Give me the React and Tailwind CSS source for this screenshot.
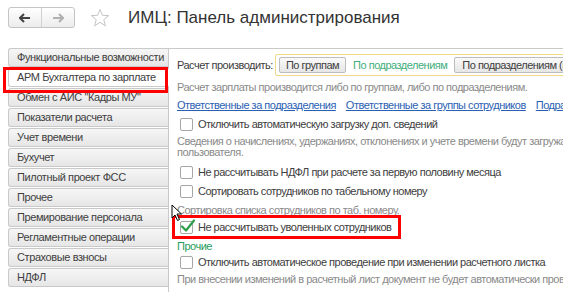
import React from 'react';

const TABS = [
  'Функциональные возможности',
  'АРМ Бухгалтера по зарплате',
  'Обмен с АИС "Кадры МУ"',
  'Показатели расчета',
  'Учет времени',
  'Бухучет',
  'Пилотный проект ФСС',
  'Прочее',
  'Премирование персонала',
  'Регламентные операции',
  'Страховые взносы',
  'НДФЛ',
];

function Checkbox({ checked, label, className = '' }) {
  return (
    <div className={`flex items-center h-[16px] ${className}`}>
      <div className="relative w-[13px] h-[13px] ml-[3px] mr-[5px] border border-[#a6a6a6] rounded-[2px] bg-white shrink-0">
        {checked && (
          <svg className="absolute -left-[1px] -top-[4px]" width="16" height="16" viewBox="0 0 16 16">
            <path d="M2 8.5 L6 12.5 L14 2.5" fill="none" stroke="#2e9d4a" strokeWidth="2.2" strokeLinecap="round" strokeLinejoin="round" />
          </svg>
        )}
      </div>
      <span className="text-[11px] tracking-[-0.5px] text-[#404040] whitespace-nowrap">{label}</span>
    </div>
  );
}

function Hint({ children, className = '' }) {
  return (
    <div className={`text-[11px] leading-[11px] tracking-[-0.5px] text-[#8a8a8a] whitespace-nowrap ${className}`}>
      {children}
    </div>
  );
}

export default function App() {
  return (
    <div className="relative w-[563px] h-[292px] overflow-hidden bg-white font-['Liberation_Sans',Arial,sans-serif]">
      {/* header */}
      <div className="flex items-start h-[48px] pl-2 pt-[7px]">
        <div className="flex h-[21px] w-[67px] border border-[#c4c4c4] rounded-[3px] bg-linear-to-b from-white to-[#ececec]">
          <div className="flex-1 flex items-center justify-center border-r border-[#d0d0d0]">
            <svg width="12" height="10" viewBox="0 0 12 10">
              <path d="M1 5 H11 M5 1 L1 5 L5 9" fill="none" stroke="#444" strokeWidth="2" />
            </svg>
          </div>
          <div className="flex-1 flex items-center justify-center">
            <svg width="12" height="10" viewBox="0 0 12 10">
              <path d="M1 5 H11 M7 1 L11 5 L7 9" fill="none" stroke="#b0b0b0" strokeWidth="2" />
            </svg>
          </div>
        </div>
        <svg className="ml-[15px] mt-[1px]" width="20" height="20" viewBox="0 0 20 20">
          <path d="M10 1.5 L12.4 7.3 L18.6 7.6 L13.8 11.6 L15.4 17.8 L10 14.3 L4.6 17.8 L6.2 11.6 L1.4 7.6 L7.6 7.3 Z" fill="none" stroke="#c4c4c4" strokeWidth="1" strokeLinejoin="round" />
        </svg>
        <h1 className="ml-[18px] -mt-[1px] text-[17px] leading-[24px] text-[#333] whitespace-nowrap">ИМЦ: Панель администрирования</h1>
      </div>

      {/* body */}
      <div className="flex pl-2">
        <div className="w-[160px] shrink-0 flex flex-col">
          {TABS.map((t, i) => (
            <div
              key={t}
              className={
                i === 1
                  ? 'relative z-10 w-[161px] h-[19px] mb-px flex items-center pl-[8px] border border-r-0 border-[#c9c9c9] rounded-l-[3px] bg-white text-[11px] tracking-[-0.4px] text-[#404040] whitespace-nowrap'
                  : 'h-[19px] mb-px flex items-center pl-[8px] border border-r-0 border-[#c9c9c9] rounded-l-[3px] bg-linear-to-b from-[#f6f6f6] to-[#e6e6e6] text-[11px] tracking-[-0.4px] text-[#404040] whitespace-nowrap'
              }
            >
              {t}
            </div>
          ))}
        </div>

        <div className="flex-1 min-w-0 h-[260px] overflow-hidden border-l border-t border-[#c9c9c9] pl-2 pt-[5px] flex flex-col">
          <div className="flex items-center h-[22px]">
            <span className="text-[11px] tracking-[-0.5px] text-[#404040] whitespace-nowrap mr-[2px]">Расчет производить:</span>
            <div className="flex shrink-0 items-center h-[22px] px-[3px] border border-[#f1d98a] rounded-[2px]">
              <div className="h-[16px] px-[6px] flex items-center border border-[#bdbdbd] rounded-[2px] bg-linear-to-b from-[#fafafa] to-[#e6e6e6] text-[11px] tracking-[-0.5px] text-[#404040] whitespace-nowrap">По группам</div>
              <div className="h-[16px] px-[7px] flex items-center text-[11px] tracking-[-0.5px] text-[#3fae7c] whitespace-nowrap">По подразделениям</div>
              <div className="h-[16px] px-[7px] flex items-center border border-[#bdbdbd] rounded-[2px] bg-linear-to-b from-[#fafafa] to-[#e6e6e6] text-[11px] tracking-[-0.5px] text-[#404040] whitespace-nowrap">По подразделениям (в разрезе групп)</div>
            </div>
          </div>

          <Hint className="mt-[5px] h-[12px] flex items-center">Расчет зарплаты производится либо по группам, либо по подразделениям.</Hint>

          <div className="mt-[5px] h-[14px] flex items-center gap-[10px] text-[11px] tracking-[-0.5px] text-[#2b5fb3] underline whitespace-nowrap">
            <span>Ответственные за подразделения</span>
            <span>Ответственные за группы сотрудников</span>
            <span>Подразделения</span>
          </div>

          <Checkbox className="mt-[4px]" label="Отключить автоматическую загрузку доп. сведений" />

          <Hint className="mt-[4px]">
            Сведения о начислениях, удержаниях, отклонениях и учете времени будут загружаться
            <br />
            пользователя.
          </Hint>

          <Checkbox className="mt-[6px]" label="Не рассчитывать НДФЛ при расчете за первую половину месяца" />
          <Checkbox className="mt-[3px]" label="Сортировать сотрудников по табельному номеру" />

          <Hint className="mt-[5px] h-[12px] flex items-center">Сортировка списка сотрудников по таб. номеру.</Hint>

          <Checkbox className="mt-[3px]" checked label="Не рассчитывать уволенных сотрудников" />

          <div className="mt-[5px] h-[12px] flex items-center text-[11px] tracking-[-0.5px] text-[#1f9d5a] whitespace-nowrap">Прочие</div>

          <Checkbox className="mt-[2px]" label="Отключить автоматическое проведение при изменении расчетного листка" />

          <Hint className="mt-[3px] h-[12px] flex items-center">При внесении изменений в расчетный лист документ не будет автоматически проведен</Hint>
        </div>
      </div>

      {/* annotations */}
      <div className="absolute left-[3px] top-[67px] w-[165px] h-[26px] border-[3px] border-[#ff0000] z-20" />
      <div className="absolute left-[172px] top-[215px] w-[229px] h-[24px] border-[3px] border-[#ff0000] z-20" />
      <svg className="absolute left-[171px] top-[204px] z-30" width="12" height="18" viewBox="0 0 12 18">
        <path d="M1 1 L1 14 L4 11 L6.5 16.5 L8.5 15.5 L6 10 L10.5 10 Z" fill="#fff" stroke="#000" strokeWidth="1" strokeLinejoin="round" />
      </svg>
    </div>
  );
}
